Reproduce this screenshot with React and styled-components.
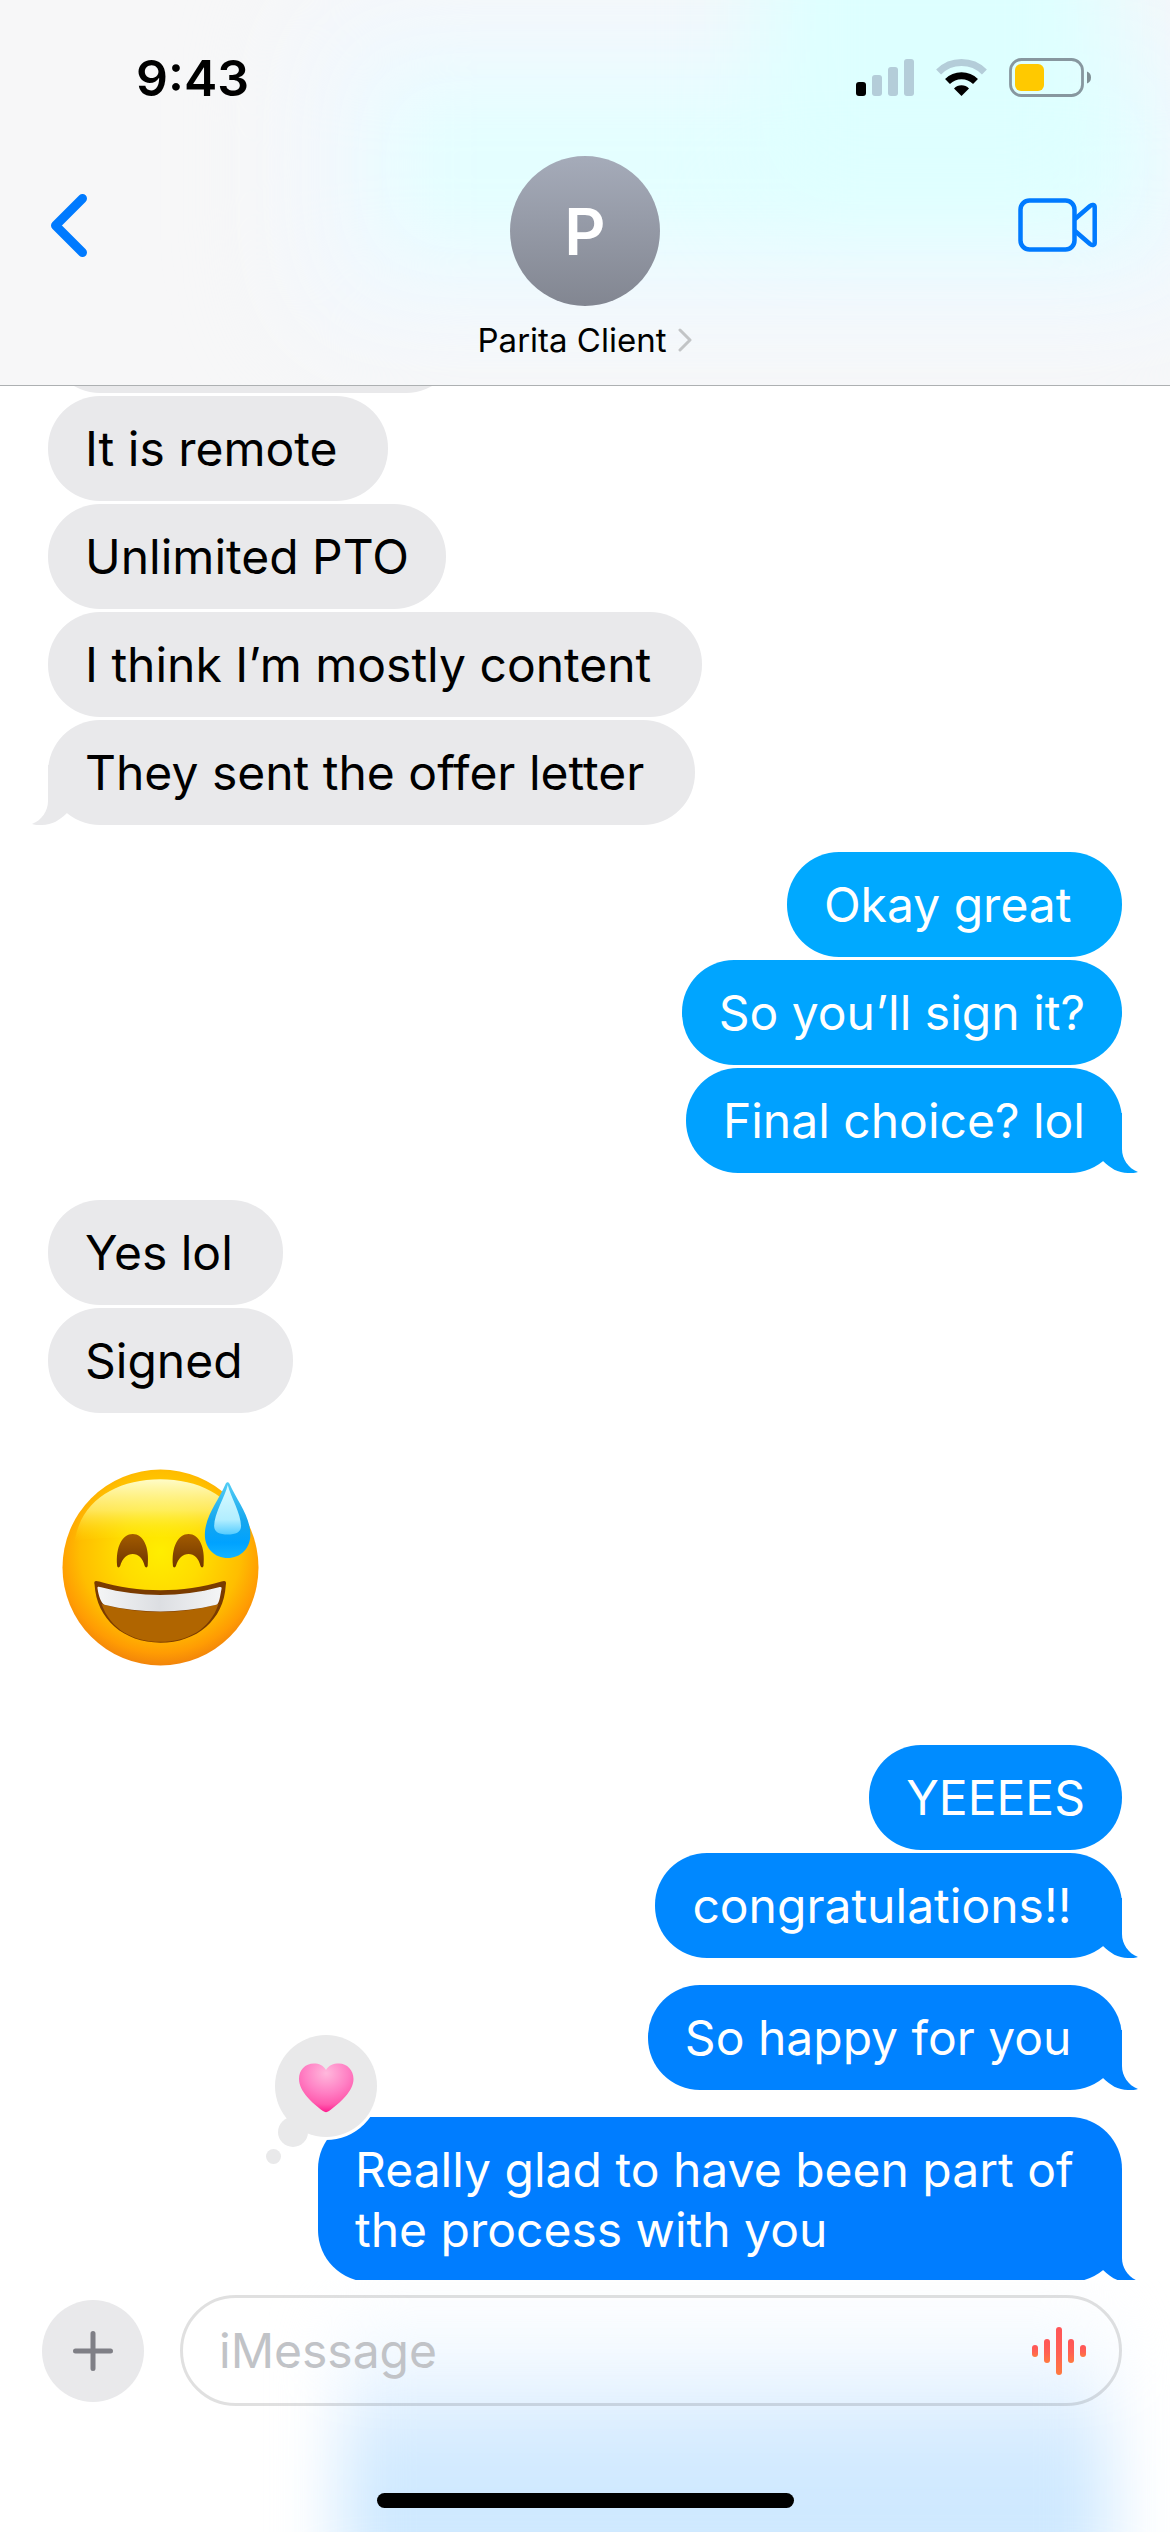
import React, { useState } from "react";
import styled, { createGlobalStyle } from "styled-components";

const groups = [
  {
    id: "offer",
    mine: false,
    messages: [
      { text: "It is remote\u00a0" },
      { text: "Unlimited PTO" },
      { text: "I think I’m mostly content\u00a0" },
      { text: "They sent the offer letter\u00a0", tail: true },
    ],
  },
  {
    id: "sign",
    mine: true,
    messages: [
      { text: "Okay great\u00a0", color: "#00a9ff" },
      { text: "So you’ll sign it?", color: "#00a5ff" },
      { text: "Final choice? lol", color: "#00a1ff", tail: true },
    ],
  },
  {
    id: "signed",
    mine: false,
    messages: [{ text: "Yes lol\u00a0" }, { text: "Signed\u00a0" }],
  },
  { id: "emoji", mine: false, emoji: true },
  {
    id: "congrats",
    mine: true,
    messages: [
      { text: "YEEEES", color: "#008cff" },
      { text: "congratulations!!\u00a0", color: "#0088ff", tail: true },
    ],
  },
  {
    id: "happy",
    mine: true,
    messages: [
      { text: "So happy for you\u00a0", color: "#0082ff", tail: true },
    ],
  },
  {
    id: "glad",
    mine: true,
    messages: [
      {
        text: "Really glad to have been part of the process with you",
        color: "#007dff",
        tail: true,
        loved: true,
      },
    ],
  },
];

const StatusIcons = () => (
  <svg width="236" height="40" viewBox="0 0 236 40" aria-hidden="true">
    <rect x="0" y="24" width="10" height="14" rx="3" fill="#000" />
    <g fill="#b4cdd9">
      <rect x="16" y="17" width="10" height="21" rx="3" />
      <rect x="32" y="9" width="10" height="29" rx="3" />
      <rect x="48" y="1" width="10" height="37" rx="3" />
    </g>
    <path
      d="M82.600 14 A32.500 32.500 0 0 1 128.400 14"
      fill="none"
      stroke="#b4cdd9"
      strokeWidth="7"
    />
    <path
      d="M91.500 23.500 A20 20 0 0 1 119.500 23.500"
      fill="none"
      stroke="#000"
      strokeWidth="7"
    />
    <path d="M105.500 38 L98 30.500 A10.500 10.500 0 0 1 113 30.500 Z" fill="#000" />
    <rect
      x="154.500"
      y="1.500"
      width="72"
      height="36"
      rx="11"
      fill="none"
      stroke="#87979f"
      strokeWidth="2.800"
    />
    <rect x="159" y="6" width="29" height="27" rx="6" fill="#ffc900" />
    <path d="M231 13.500 Q235 15 235 19.500 Q235 24 231 25.500 Z" fill="#7f8f94" />
  </svg>
);

const Emoji = () => (
  <svg
    width="197"
    height="197"
    viewBox="185 866 591 593"
    role="img"
    aria-label="grinning face with sweat"
  >
    <defs>
      <radialGradient id="face" cx="0.5" cy="0.42" r="0.6">
        <stop offset="0" stopColor="#ffee00" />
        <stop offset="0.35" stopColor="#ffdc00" />
        <stop offset="0.68" stopColor="#ffbe00" />
        <stop offset="0.86" stopColor="#ff9c03" />
        <stop offset="1" stopColor="#ee7d0c" />
      </radialGradient>
      <linearGradient id="shine" x1="0" y1="0" x2="0" y2="1">
        <stop offset="0" stopColor="#fffcc8" />
        <stop offset="0.5" stopColor="#fff680" stopOpacity="0.7" />
        <stop offset="1" stopColor="#fff000" stopOpacity="0" />
      </linearGradient>
      <linearGradient id="teeth" x1="0" y1="0" x2="1" y2="0">
        <stop offset="0" stopColor="#f4f5f6" />
        <stop offset="0.5" stopColor="#dcdee2" />
        <stop offset="1" stopColor="#f4f5f6" />
      </linearGradient>
      <linearGradient id="eye" x1="0" y1="0" x2="0" y2="1">
        <stop offset="0" stopColor="#a25b00" />
        <stop offset="1" stopColor="#6f3500" />
      </linearGradient>
      <linearGradient id="drop" x1="0" y1="0" x2="0" y2="1">
        <stop offset="0" stopColor="#54cdf5" />
        <stop offset="0.5" stopColor="#16a7ee" />
        <stop offset="0.8" stopColor="#00a2ff" />
        <stop offset="1" stopColor="#12b4ff" />
      </linearGradient>
      <linearGradient id="dropShine" x1="0" y1="0" x2="0" y2="1">
        <stop offset="0" stopColor="#dcfbff" />
        <stop offset="0.7" stopColor="#b2eeff" />
        <stop offset="1" stopColor="#55ccff" />
      </linearGradient>
    </defs>
    <circle cx="480.500" cy="1162.500" r="295" fill="url(#face)" />
    <path
      d="M222 1085 C240 960 350 897 480 897 C610 897 720 960 738 1085 C690 1065 270 1065 222 1085 Z"
      fill="url(#shine)"
    />
    <path
      d="M350 1158 C345 1100 366 1062 397 1062 C428 1062 448 1100 442 1158 C440 1164 435 1163 433 1158 C427 1134 414 1122 397 1122 C380 1122 366 1134 359 1158 C357 1163 351 1164 350 1158 Z"
      fill="url(#eye)"
    />
    <path
      d="M518 1158 C513 1100 534 1062 565 1062 C596 1062 616 1100 610 1158 C608 1164 603 1163 601 1158 C595 1134 582 1122 565 1122 C548 1122 534 1134 527 1158 C525 1163 519 1164 518 1158 Z"
      fill="url(#eye)"
    />
    <path
      d="M282 1214 C279 1202 285 1201 296 1205 C410 1240 552 1240 664 1205 C675 1201 680 1204 677 1216 C671 1320 590 1389 480 1389 C370 1389 288 1318 282 1214 Z"
      fill="#7a3b00"
    />
    <path
      d="M303 1272 C415 1304 545 1304 655 1272 C630 1348 562 1386 480 1386 C398 1386 330 1348 303 1272 Z"
      fill="#b06500"
    />
    <path
      d="M291 1226 C289 1220 294 1219 302 1222 C420 1253 540 1253 656 1222 C663 1220 666 1222 664 1228 C660 1248 658 1272 648 1275 C540 1302 420 1302 312 1275 C302 1272 294 1248 291 1226 Z"
      fill="url(#teeth)"
    />
    <path
      d="M676 912 C680 904 685 904 689 912 C710 960 751 1008 751 1064 C751 1106 721 1134 683 1134 C644 1134 614 1106 614 1064 C614 1008 656 960 676 912 Z"
      fill="url(#drop)"
    />
    <path
      d="M683 914 C692 950 723 1000 723 1038 C723 1056 706 1063 683 1063 C659 1063 642 1056 642 1038 C642 1000 674 950 683 914 Z"
      fill="url(#dropShine)"
    />
  </svg>
);

const BubbleTail = ({ mine, color }) => (
  <Tail
    $mine={mine}
    width="60"
    height="60"
    viewBox="0 0 60 60"
    aria-hidden="true"
  >
    <path
      d="M43 0 V36 C43 46 49 55 59 59 C57 60 53 60 49 60 C39 60 31 55 24 48 L0 24 V0 Z"
      fill={color}
    />
  </Tail>
);

const HeartReaction = () => (
  <Reaction width="116" height="136" viewBox="0 0 116 136" role="img" aria-label="Loved">
    <defs>
      <radialGradient id="heart" cx="0.5" cy="0.2" r="0.8">
        <stop offset="0" stopColor="#ffb8dc" />
        <stop offset="0.5" stopColor="#ff80c4" />
        <stop offset="0.8" stopColor="#ff5bae" />
        <stop offset="1" stopColor="#ff1e90" />
      </radialGradient>
    </defs>
    <circle cx="62" cy="56" r="54" fill="#fff" />
    <g fill="#e9e9ea">
      <circle cx="62" cy="56" r="51" />
      <circle cx="29" cy="102" r="15" />
      <circle cx="9.500" cy="126.500" r="7.500" />
    </g>
    <path
      d="M62 40 C59 35 55 33.500 50 33.500 C41 33.500 35 40 35 49 C35 61 48 73 59 81 C61 82.500 63 82.500 65 81 C76 73 89.500 61 89.500 49 C89.500 40 83 33.500 75 33.500 C69 33.500 65 35 62 40 Z"
      fill="url(#heart)"
    />
  </Reaction>
);

const App = () => {
  const [draft, setDraft] = useState("");

  return (
    <Screen>
      <GlobalStyle />
      <Header>
        <StatusBar>
          <Time>9:43</Time>
          <StatusIcons />
        </StatusBar>
        <NavBar>
          <IconButton aria-label="Back">
            <svg width="46" height="70" viewBox="0 0 46 70" fill="none">
              <path
                d="M36.500 8.500 L9.500 35.500 L36.500 62.500"
                stroke="#007aff"
                strokeWidth="9"
                strokeLinecap="round"
                strokeLinejoin="round"
              />
            </svg>
          </IconButton>
          <Contact>
            <Avatar>P</Avatar>
            <ContactName>
              Parita Client
              <svg width="14" height="24" viewBox="0 0 14 24" fill="none">
                <path
                  d="M2 2 L12 12 L2 22"
                  stroke="#c2c4c6"
                  strokeWidth="3"
                  strokeLinecap="round"
                  strokeLinejoin="round"
                />
              </svg>
            </ContactName>
          </Contact>
          <IconButton aria-label="FaceTime">
            <svg width="80" height="54" viewBox="0 0 80 54" fill="none">
              <g stroke="#007aff" strokeWidth="4.500" strokeLinejoin="round">
                <rect x="2.500" y="2.500" width="54" height="49" rx="9" />
                <path d="M57 21 L72 8 C74 6 76.700 7 76.700 9 V45 C76.700 47 74 48 72 46 L57 33" />
              </g>
            </svg>
          </IconButton>
        </NavBar>
      </Header>

      <Viewport>
        <Thread>
          <EarlierBubble />
          {groups.map((group) =>
            group.emoji ? (
              <EmojiRow key={group.id}>
                <Emoji />
              </EmojiRow>
            ) : (
              <Group key={group.id} $mine={group.mine}>
                {group.messages.map((message) => (
                  <Bubble
                    key={message.text}
                    $mine={group.mine}
                    $color={message.color}
                  >
                    {message.tail && (
                      <BubbleTail
                        mine={group.mine}
                        color={message.color || "#e9e9eb"}
                      />
                    )}
                    {message.loved && <HeartReaction />}
                    <BubbleText>{message.text}</BubbleText>
                  </Bubble>
                ))}
              </Group>
            )
          )}
        </Thread>
      </Viewport>

      <Footer>
        <Composer>
          <AddButton aria-label="Add attachment">
            <svg width="40" height="40" viewBox="0 0 40 40" fill="none">
              <path
                d="M20 2.500 V37.500 M2.500 20 H37.500"
                stroke="#7f7f86"
                strokeWidth="5"
                strokeLinecap="round"
              />
            </svg>
          </AddButton>
          <Field>
            <TextInput
              aria-label="Message"
              placeholder="iMessage"
              value={draft}
              onChange={(e) => setDraft(e.target.value)}
            />
            <IconButton aria-label="Record audio">
              <svg width="54" height="48" viewBox="0 0 54 48">
                <defs>
                  <linearGradient id="wave" x1="0" y1="0" x2="0" y2="1">
                    <stop offset="0" stopColor="#ff5558" />
                    <stop offset="0.55" stopColor="#ff6054" />
                    <stop offset="1" stopColor="#ff7a3f" />
                  </linearGradient>
                </defs>
                <g fill="url(#wave)">
                  <rect x="0" y="18" width="6" height="12" rx="3" />
                  <rect x="12" y="12" width="6" height="24" rx="3" />
                  <rect x="24" y="0" width="6" height="48" rx="3" />
                  <rect x="36" y="12" width="6" height="24" rx="3" />
                  <rect x="48" y="18" width="6" height="12" rx="3" />
                </g>
              </svg>
            </IconButton>
          </Field>
        </Composer>
        <HomeIndicator />
      </Footer>
    </Screen>
  );
};

const GlobalStyle = createGlobalStyle`
  * {
    box-sizing: border-box;
  }

  body {
    margin: 0;
    background: #fff;
    font-family: Inter, "Liberation Sans", sans-serif;
  }

  svg {
    display: block;
    flex-shrink: 0;
  }
`;

const Screen = styled.div`
  display: flex;
  flex-direction: column;
  height: 100vh;
  overflow: hidden;
  background: #fff;
`;

const Header = styled.header`
  position: relative;
  isolation: isolate;
  overflow: hidden;
  padding-bottom: 26px;
  border-bottom: 1px solid #adb0b2;
  background: #f7f7f8;

  &::before,
  &::after {
    content: "";
    position: absolute;
    z-index: -1;
    filter: blur(48px);
  }

  &::before {
    top: 85px;
    right: 30px;
    bottom: 140px;
    left: 390px;
    background: #e3ffff;
    box-shadow: 0 0 80px 80px #f0f8ff;
  }

  &::after {
    top: -100px;
    right: 60px;
    bottom: 180px;
    left: 760px;
    background: #ddffff;
  }
`;

const StatusBar = styled.div`
  display: flex;
  justify-content: space-between;
  align-items: center;
  height: 156px;
  padding: 0 78px 0 136px;
`;

const Time = styled.span`
  font-size: 50px;
  line-height: 60px;
  font-weight: 600;
`;

const NavBar = styled.nav`
  display: grid;
  grid-template-columns: 1fr auto 1fr;
  padding: 0 72px 0 46px;

  > button {
    justify-self: start;
    height: 138px;
  }

  > button:last-child {
    justify-self: end;
  }
`;

const IconButton = styled.button`
  display: flex;
  align-items: center;
  padding: 0;
  border: 0;
  background: none;
`;

const Contact = styled.div`
  display: flex;
  flex-direction: column;
  align-items: center;
  gap: 15px;
  margin-left: 26px;
`;

const Avatar = styled.div`
  display: flex;
  align-items: center;
  justify-content: center;
  width: 150px;
  height: 150px;
  border-radius: 50%;
  background: linear-gradient(#a5abb9, #828691);
  color: #fff;
  font-size: 64px;
  font-weight: 600;
`;

const ContactName = styled.div`
  display: flex;
  align-items: center;
  gap: 12px;
  font-size: 33px;
  line-height: 38px;
`;

const Viewport = styled.main`
  display: flex;
  flex: 1;
  flex-direction: column;
  justify-content: flex-end;
  min-height: 0;
  overflow: hidden;
`;

const Thread = styled.div`
  display: flex;
  flex-direction: column;
  gap: 27px;
  margin-bottom: -2px;
  padding: 0 48px;
`;

const EarlierBubble = styled.div`
  flex-shrink: 0;
  align-self: flex-start;
  width: 410px;
  height: 105px;
  margin-bottom: -24px;
  border-radius: 52px;
  background: #e9e9eb;
`;

const Group = styled.div`
  display: flex;
  flex-direction: column;
  align-items: ${(props) => (props.$mine ? "flex-end" : "flex-start")};
  gap: 3px;
`;

const Bubble = styled.div`
  position: relative;
  isolation: isolate;
  max-width: 804px;
  padding: 23px 37px 22px;
  border-radius: 52px;
  background: ${(props) => props.$color || "#e9e9eb"};
  color: ${(props) => (props.$mine ? "#fff" : "#000")};
`;

const BubbleText = styled.p`
  margin: 0;
  font-size: 48px;
  line-height: 60px;
`;

const Tail = styled.svg`
  position: absolute;
  z-index: -1;
  bottom: 0;
  ${(props) => (props.$mine ? "right: -17px;" : "left: -17px;")}
  ${(props) => !props.$mine && "transform: scaleX(-1);"}
`;

const Reaction = styled.svg`
  position: absolute;
  top: -87px;
  left: -54px;
`;

const EmojiRow = styled.div`
  padding: 29px 14px 52px;
`;

const Footer = styled.footer`
  position: relative;
  isolation: isolate;
  overflow: hidden;
  display: flex;
  flex-direction: column;
  align-items: center;
  gap: 87px;
  padding: 15px 0 24px;
  background: #fff;

  &::before {
    content: "";
    position: absolute;
    z-index: -1;
    top: 10px;
    right: 60px;
    bottom: -60px;
    left: 340px;
    background: linear-gradient(
      #f7fbff00,
      #f1f8ff 26%,
      #dceeff 44%,
      #cfe9ff 60%
    );
    filter: blur(32px);
  }
`;

const Composer = styled.div`
  display: flex;
  align-items: center;
  gap: 36px;
  width: 100%;
  padding: 0 48px 0 42px;
`;

const AddButton = styled.button`
  display: flex;
  align-items: center;
  justify-content: center;
  width: 102px;
  height: 102px;
  padding: 0;
  border: 0;
  border-radius: 50%;
  background: #e9e9eb;
`;

const Field = styled.div`
  display: flex;
  flex: 1;
  align-items: center;
  height: 111px;
  padding: 0 33px 0 36px;
  border: 3px solid #0000001f;
  border-radius: 56px;
`;

const TextInput = styled.input`
  flex: 1;
  min-width: 0;
  padding: 0;
  border: 0;
  outline: 0;
  background: none;
  font-family: inherit;
  font-size: 48px;
  line-height: 60px;

  &::placeholder {
    color: #c1c3c7;
    opacity: 1;
  }
`;

const HomeIndicator = styled.div`
  width: 417px;
  height: 15px;
  border-radius: 8px;
  background: #000;
`;

export default App;
